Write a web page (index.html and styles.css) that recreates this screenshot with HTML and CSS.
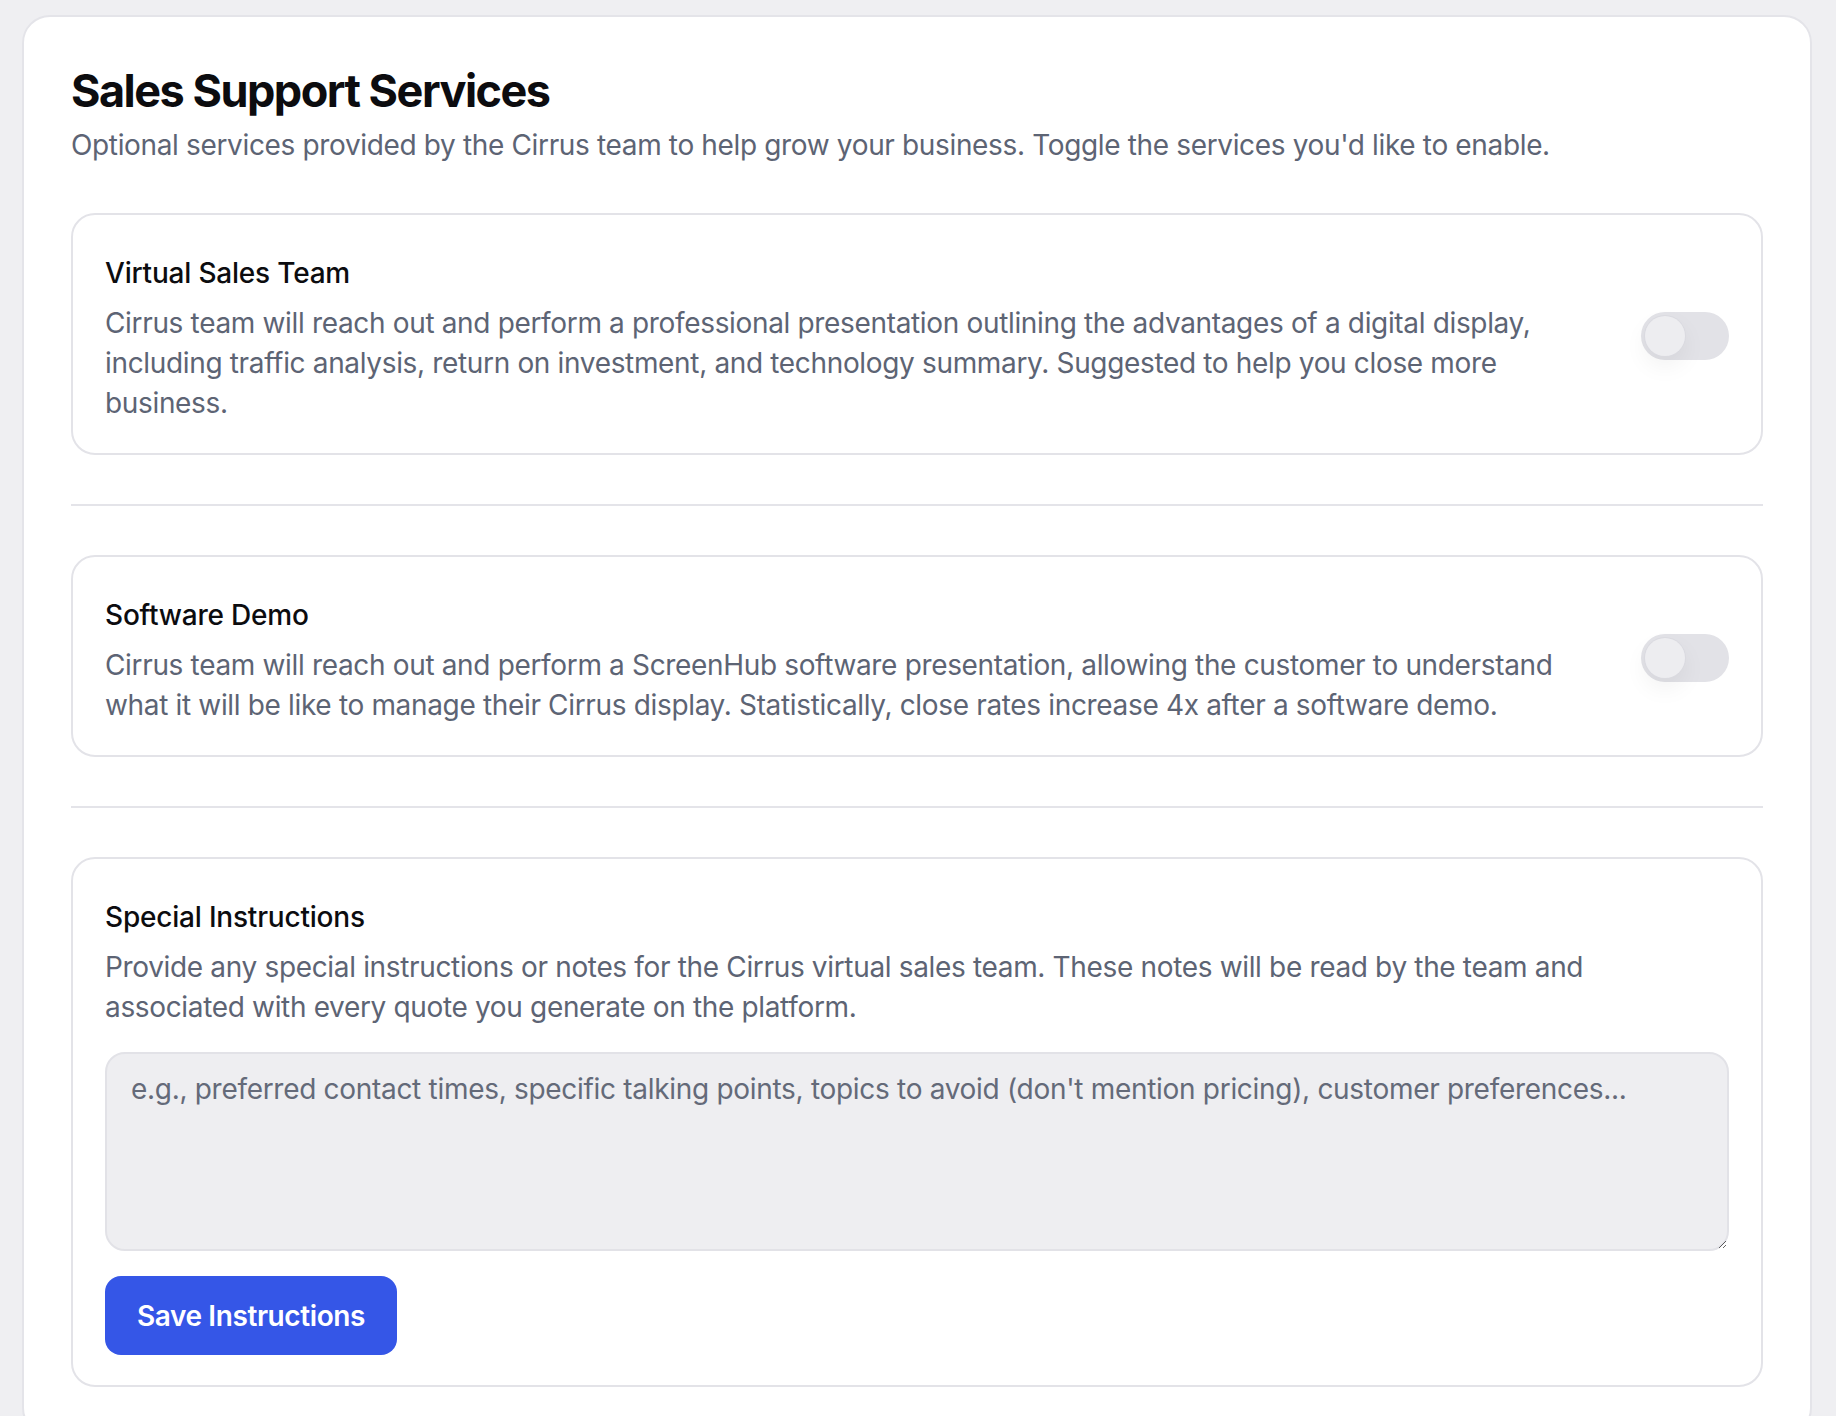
FILE: index.html
```html
<!DOCTYPE html>
<html lang="en">
<head>
    <meta charset="UTF-8">
    <title>Sales Support Services</title>
    <link rel="stylesheet" href="styles.css">
</head>
<body>
<div class="page">
    <section class="panel">
        <h1 class="panel-title">Sales Support Services</h1>
        <p class="panel-sub">Optional services provided by the Cirrus team to help grow your business. Toggle the services you'd like to enable.</p>

        <!-- virtual sales team -->
        <div class="service">
            <div class="service-text">
                <h3 class="service-name">Virtual Sales Team</h3>
                <p class="service-desc">Cirrus team will reach out and perform a professional presentation outlining the advantages of a digital display, including traffic analysis, return on investment, and technology summary. Suggested to help you close more business.</p>
            </div>
            <label class="switch">
                <input type="checkbox">
                <span class="knob"></span>
            </label>
        </div>

        <hr class="divider">

        <!-- software demo -->
        <div class="service">
            <div class="service-text">
                <h3 class="service-name">Software Demo</h3>
                <p class="service-desc">Cirrus team will reach out and perform a ScreenHub software presentation, allowing the customer to understand what it will be like to manage their Cirrus display. Statistically, close rates increase 4x after a software demo.</p>
            </div>
            <label class="switch">
                <input type="checkbox">
                <span class="knob"></span>
            </label>
        </div>

        <hr class="divider">

        <!-- special instructions -->
        <div class="service notes">
            <h3 class="service-name">Special Instructions</h3>
            <p class="service-desc notes-desc">Provide any special instructions or notes for the Cirrus virtual sales team. These notes will be read by the team and associated with every quote you generate on the platform.</p>
            <textarea class="notes-box" placeholder="e.g., preferred contact times, specific talking points, topics to avoid (don't mention pricing), customer preferences..."></textarea>
            <button class="save-btn">Save Instructions</button>
        </div>
    </section>
</div>
</body>
</html>
```

FILE: styles.css
```css
html, body {
    margin: 0;
    background-color: #efeff2;
    font-family: Inter, "Noto Sans", sans-serif;
}
.page {
    padding: 15px 24px 0 22px;
}
.panel {
    background: #fff;
    border: 2px solid #e4e4e9;
    border-radius: 28px;
    padding: 49px 47px 47px;
}
.panel-title {
    margin: 0;
    font-size: 45px;
    line-height: 50px;
    font-weight: 700;
    letter-spacing: -1.5px;
    color: #0c0c0f;
}
.panel-sub {
    margin: 9px 0 48px;
    font-size: 28px;
    line-height: 40px;
    color: #5d6474;
    letter-spacing: -0.35px;
}
.service {
    display: flex;
    align-items: center;
    gap: 48px;
    border: 2px solid #e3e3e8;
    border-radius: 24px;
    padding: 34px 32px 30px;
}
.service-text {
    flex: 1;
}
.service-name {
    margin: 0;
    font-size: 28px;
    line-height: 48px;
    font-weight: 500;
    color: #0c0c0f;
    letter-spacing: -0.2px;
}
.service-desc {
    margin: 6px 0 0;
    font-size: 28px;
    line-height: 40px;
    color: #5d6474;
    letter-spacing: -0.34px;
}
.notes-desc {
    max-width: 1560px;
}
.divider {
    border: none;
    height: 2px;
    background: #e4e4e9;
    margin: 49px 0;
}
.switch {
    position: relative;
    flex: none;
    width: 88px;
    height: 48px;
    border-radius: 24px;
    background: #e2e2e7;
    cursor: pointer;
}
.switch input {
    display: none;
}
.knob {
    position: absolute;
    left: 4px;
    top: 4px;
    width: 40px;
    height: 40px;
    border-radius: 50%;
    background: #ededf0;
    box-shadow: 0 0 0 1px #dadae0, 0 10px 24px rgba(0, 0, 0, 0.06);
}
.switch input:checked + .knob {
    left: 44px;
}
.notes {
    display: block;
}
.notes-box {
    display: block;
    box-sizing: border-box;
    width: 100%;
    height: 199px;
    margin-top: 25px;
    padding: 15px 24px;
    border: 2px solid #e2e2e7;
    border-radius: 20px;
    background: #eeeef1;
    font-family: Inter, "Noto Sans", sans-serif;
    font-size: 28px;
    line-height: 40px;
    letter-spacing: -0.3px;
    color: #222;
    resize: vertical;
}
.notes-box::placeholder {
    color: #646a79;
}
.save-btn {
    display: block;
    margin-top: 25px;
    height: 79px;
    padding: 0 32px;
    border: none;
    border-radius: 16px;
    background: #3556e7;
    color: #fff;
    font-family: Inter, "Noto Sans", sans-serif;
    font-size: 28px;
    font-weight: 600;
    letter-spacing: -0.4px;
    cursor: pointer;
}
```
